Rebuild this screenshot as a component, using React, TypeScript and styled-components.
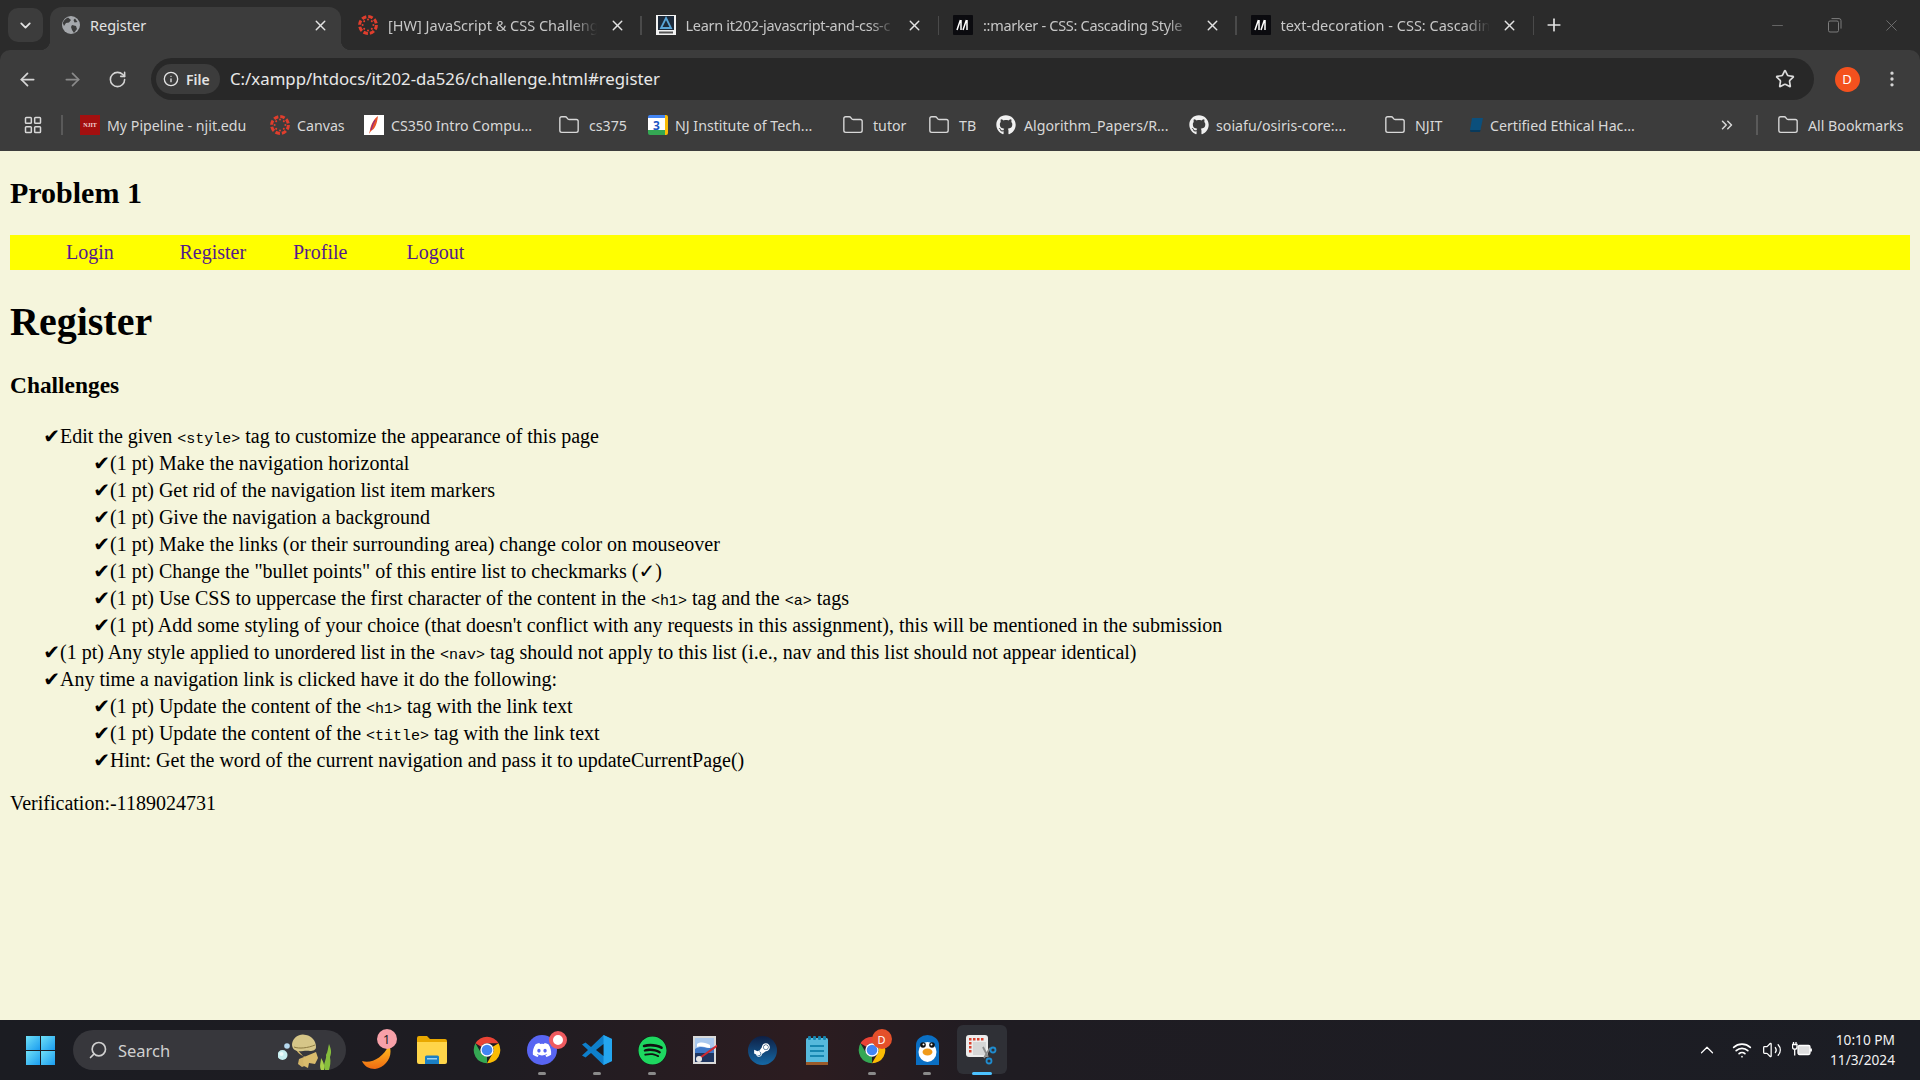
import React from "react";
import styled, { createGlobalStyle } from "styled-components";
import {
  ArrowLeft,
  ArrowRight,
  ChevronDown,
  ChevronsRight,
  ChevronUp,
  EllipsisVertical,
  Folder,
  Info,
  LayoutGrid,
  Minus,
  Plus,
  RotateCw,
  Search,
  Star,
  Volume2,
  Wifi,
  X,
} from "lucide-react";
import { FaDiscord, FaGithub, FaSpotify, FaSteamSymbol } from "react-icons/fa";

const UI_FONT = `"Noto Sans", "Open Sans", sans-serif`;

const GlobalStyle = createGlobalStyle`
  html, body { margin: 0; padding: 0; height: 100%; overflow: hidden; }
  #root { height: 100%; }
`;

/* ---------- favicons ---------- */

const GlobeFav = () => (
  <svg width="18" height="18" viewBox="0 0 18 18">
    <circle cx="9" cy="9" r="9" fill="#a5a8ac" />
    <path d="M6 1.5 9 4 7 6.5 4 7 2 10 .8 7A9 9 0 0 1 6 1.5zM10 9l4 1 1 3-3 4-2-3-1-3zM13 2.5l2.5 3.5-3 .5-1-2.5z" fill="#3c3c3c" />
  </svg>
);

const CanvasFav = ({ size = 20 }: { size?: number }) => (
  <svg width={size} height={size} viewBox="0 0 20 20" fill="#e03e2d">
    <circle cx="10" cy="10" r="8.4" fill="none" stroke="#e03e2d" strokeWidth="3" strokeDasharray="4.6 2" />
    {[0, 45, 90, 135, 180, 225, 270, 315].map((a) => (
      <circle key={a} cx="10" cy="4.6" r="1" transform={`rotate(${a} 10 10)`} />
    ))}
  </svg>
);

const LearnFav = () => (
  <svg width="20" height="20" viewBox="0 0 20 20">
    <rect width="20" height="20" fill="#f2f2f2" />
    <rect x="2" y="1" width="16" height="14" fill="#1c2a3a" />
    <path d="M10 3l5 10H5z" fill="none" stroke="#5aa6d8" strokeWidth="1.8" />
    <rect x="3" y="16.5" width="14" height="2" fill="#555" />
  </svg>
);

const MdnFav = () => (
  <svg width="20" height="20" viewBox="0 0 20 20">
    <rect width="20" height="20" rx="1" fill="#0b0b0f" />
    <path d="M4 15 7.4 5M8 15V5M10 15 13.4 5M14 15V5" stroke="#fff" strokeWidth="1.5" fill="none" />
  </svg>
);

const NjitMark = styled.span`
  width: 20px;
  height: 20px;
  background: #a30f0f;
  color: #f3d6d6;
  font: 700 6px "Liberation Serif", serif;
  display: flex;
  align-items: center;
  justify-content: center;
`;

const FeatherFav = () => (
  <svg width="20" height="20" viewBox="0 0 20 20">
    <rect width="20" height="20" fill="#fff" />
    <path d="M14 1c-4 3-7 8-8 14l-1 4 2-3c4-2 6-7 7-15z" fill="#e8532b" />
    <path d="M11 5c-2 3-3 6-4 10" stroke="#8e2a86" strokeWidth="1.2" fill="none" />
  </svg>
);

const CalendarMark = styled.span`
  width: 20px;
  height: 20px;
  border-radius: 2px;
  background: linear-gradient(#4285f4 0 3px, #fff 3px 15px, #34a853 15px);
  border-right: 3px solid #fbbc04;
  box-sizing: border-box;
  color: #1a56c4;
  font: 700 12px ${UI_FONT};
  display: flex;
  align-items: center;
  justify-content: center;
`;

const BookFav = () => (
  <svg width="18" height="18" viewBox="0 0 18 18">
    <path d="M5 2h11l-2.5 12H3z" fill="#0b4f7c" />
    <path d="M3 14h10.500L13 16H3.500z" fill="#083a5c" />
  </svg>
);

const ChromeLogo = ({ size }: { size: number }) => (
  <svg width={size} height={size} viewBox="0 0 48 48">
    <path d="M6.68 14A20 20 0 0 1 41.32 14H24A10 10 0 0 0 15.34 19Z" fill="#ea4335" />
    <path d="M6.68 14A20 20 0 0 1 41.32 14H24A10 10 0 0 0 15.34 19Z" fill="#fbbc04" transform="rotate(120 24 24)" />
    <path d="M6.68 14A20 20 0 0 1 41.32 14H24A10 10 0 0 0 15.34 19Z" fill="#34a853" transform="rotate(240 24 24)" />
    <circle cx="24" cy="24" r="10" fill="#fff" />
    <circle cx="24" cy="24" r="8" fill="#4285f4" />
  </svg>
);

const WindowsLogo = () => (
  <svg width="29" height="29" viewBox="0 0 29 29">
    <defs>
      <linearGradient id="win" x1="0" y1="0" x2="1" y2="1">
        <stop offset="0" stopColor="#6fe0f7" />
        <stop offset="1" stopColor="#1a9cf0" />
      </linearGradient>
    </defs>
    <rect width="14" height="14" fill="url(#win)" />
    <rect x="15" width="14" height="14" fill="url(#win)" />
    <rect y="15" width="14" height="14" fill="url(#win)" />
    <rect x="15" y="15" width="14" height="14" fill="url(#win)" />
  </svg>
);

const Jellyfish = () => (
  <svg width="58" height="40" viewBox="0 0 58 40">
    <circle cx="4.500" cy="25" r="5" fill="#c8eef0" />
    <circle cx="3.500" cy="24" r="2" fill="#eefbfb" />
    <circle cx="9" cy="16" r="2.800" fill="#b6d8ee" />
    <path d="M17 17c2 6 5 8 11 10l1 8-5 2-4-3 1-5 5-2" fill="#d2b468" />
    <path d="M26 27l12-5 2 6-3 6-6-1-1 5-4-2-1-5z" fill="#d9bb6c" />
    <path d="M14 14C15 7 22 3 28 5c6 1 10 6 10 12 0 3-3 4-6 4-5-1-9 1-13 0-3-1-5-3-5-7z" fill="#d6c688" />
    <path d="M16 17c5 2 14 1 21-2" stroke="#8c7a42" strokeWidth="1" fill="none" />
    <path d="M47 40c-3-6 2-10 1-15 2-4 2-7 3-11 2 5 3 8 1 13 1 5 0 9-1 13z" fill="#86bd3c" />
    <path d="M43 40c-2-4 0-8 0-12 2 3 4 7 3 12z" fill="#a9cf4a" />
  </svg>
);

const Moon = () => (
  <svg width="30" height="24" viewBox="0 0 30 24">
    <defs>
      <linearGradient id="moon" x1="0" y1="0" x2="0" y2="1">
        <stop offset="0" stopColor="#ffc21f" />
        <stop offset="1" stopColor="#f06a12" />
      </linearGradient>
    </defs>
    <path d="M27 0c5 10-3 23-14 24C7 24 2 21 0 16c9 3 21-3 27-16z" fill="url(#moon)" />
  </svg>
);

const FolderApp = () => (
  <svg width="30" height="28" viewBox="0 0 30 28">
    <path d="M0 2a2 2 0 0 1 2-2h8l3 3h15a2 2 0 0 1 2 2v3H0z" fill="#e9a800" />
    <path d="M0 6h30v20a2 2 0 0 1-2 2H2a2 2 0 0 1-2-2z" fill="#ffd54a" />
    <path d="M8 21a1.500 1.500 0 0 1 1.500-1.500h11A1.500 1.500 0 0 1 22 21v7H8z" fill="#1b7fc4" />
    <rect x="10" y="22" width="10" height="1.500" fill="#9fd4f2" />
  </svg>
);

const DiscordBadge = styled.span`
  width: 30px;
  height: 30px;
  border-radius: 50%;
  background: #5865f2;
  color: #fff;
  display: flex;
  align-items: center;
  justify-content: center;
`;

const VsCode = () => (
  <svg width="30" height="30" viewBox="0 0 30 30">
    <path d="M21.500 0 30 4v22l-8.500 4L9 18l-5.500 4.500L0 20.500l6-5.500-6-5.500L3.500 7.500 9 12z" fill="#0e7fcb" />
    <path d="M21.500 0 30 4v22l-8.500 4z" fill="#24a6f0" />
    <path d="M21.500 9l-7.500 6 7.500 6z" fill="#1b1c22" />
  </svg>
);

const SpotifyBadge = styled.span`
  width: 29px;
  height: 29px;
  border-radius: 50%;
  background: #111;
  color: #1ed760;
  display: flex;
  align-items: center;
  justify-content: center;
`;

const PaintApp = () => (
  <svg width="24" height="28" viewBox="0 0 24 28">
    <rect width="23" height="28" fill="#d9d9d9" />
    <rect x="2" y="2" width="19" height="24" fill="#3f78c8" />
    <path d="M2 2h19v9c-6 3-12-3-19 2z" fill="#a9c8ee" />
    <path d="M4 8c4-3 9-1 13 1v3c-5 0-9-3-13-1z" fill="#fff" />
    <rect x="2" y="17" width="19" height="9" fill="#1e3560" />
    <path d="M4 24 25 9" stroke="#d02a30" strokeWidth="2" />
    <circle cx="6" cy="23" r="3" fill="#e6e6e6" />
  </svg>
);

const SteamBadge = styled.span`
  width: 29px;
  height: 29px;
  border-radius: 50%;
  background: linear-gradient(#0e1f44, #1569a6);
  color: #fff;
  display: flex;
  align-items: center;
  justify-content: center;
`;

const Notepad = () => (
  <svg width="22" height="29" viewBox="0 0 22 29">
    <rect y="2" width="22" height="27" rx="1.500" fill="#56b9dc" />
    <rect y="26" width="22" height="3" fill="#9a5a2a" />
    <g fill="#1686b0">
      <rect x="2" width="3" height="4" rx="1" />
      <rect x="7" width="3" height="4" rx="1" />
      <rect x="12" width="3" height="4" rx="1" />
      <rect x="17" width="3" height="4" rx="1" />
      <rect x="4" y="9" width="14" height="2" />
      <rect x="4" y="14" width="14" height="2" />
      <rect x="4" y="19" width="14" height="2" />
    </g>
  </svg>
);

const Penguin = () => (
  <svg width="23" height="30" viewBox="0 0 23 30">
    <path d="M0 30V10a11.500 10 0 0 1 23 0v20z" fill="#0a6fc4" />
    <ellipse cx="11.500" cy="17" rx="9" ry="10" fill="#fff" />
    <circle cx="7" cy="10" r="2.800" fill="#111" />
    <circle cx="16" cy="10" r="2.800" fill="#111" />
    <circle cx="7.500" cy="9.500" r="1" fill="#fff" />
    <circle cx="15.500" cy="9.500" r="1" fill="#fff" />
    <ellipse cx="11.500" cy="17" rx="5" ry="3.500" fill="#f09a1a" />
  </svg>
);

const SnipTool = () => (
  <svg width="32" height="30" viewBox="0 0 32 30">
    <rect width="22" height="22" rx="3" fill="#ececec" />
    <rect x="7" y="7" width="13" height="13" fill="#d6d6d6" />
    <g fill="#d8402c">
      <rect x="3" y="3" width="2.500" height="2.500" />
      <rect x="7" y="3" width="2.500" height="2.500" />
      <rect x="11" y="3" width="2.500" height="2.500" />
      <rect x="15" y="3" width="2.500" height="2.500" />
      <rect x="3" y="7" width="2.500" height="2.500" />
      <rect x="3" y="11" width="2.500" height="2.500" />
      <rect x="3" y="15" width="2.500" height="2.500" />
    </g>
    <path d="M17 12 22 22M24 13 18 23" stroke="#8a8a8a" strokeWidth="1.800" />
    <circle cx="27" cy="15" r="2.500" fill="none" stroke="#1f8ccf" strokeWidth="1.800" />
    <circle cx="23" cy="26" r="2.500" fill="none" stroke="#1f8ccf" strokeWidth="1.800" />
  </svg>
);

const BatteryPlug = () => (
  <svg width="20" height="18" viewBox="0 0 20 18" fill="none" stroke="#fff" strokeWidth="1.300">
    <rect x="6" y="4.500" width="12" height="9" rx="1.500" fill="#fff" fillOpacity=".85" />
    <path d="M19 7.500v3" strokeWidth="1.800" />
    <path d="M1.500 1v2.500M4 1v2.500M.5 3.500H5V6a2.200 2.200 0 0 1-4.500 0zM2.700 8v6.500" />
  </svg>
);

const RestoreIcon = () => (
  <svg width="14" height="15" viewBox="0 0 14 15" fill="none" stroke="#7d7d7d">
    <rect x=".5" y="3" width="10" height="11" rx="1.500" />
    <path d="M3.500.6h7.500a2 2 0 0 1 2 2v8" />
  </svg>
);

/* ---------- browser chrome ---------- */

const Screen = styled.div`
  height: 100vh;
  display: flex;
  flex-direction: column;
  background: #2b2b2b;
`;

const TabStrip = styled.div`
  height: 50px;
  flex: none;
  display: flex;
  align-items: flex-end;
  box-sizing: border-box;
  padding-left: 8px;
`;

const TabMenu = styled.div`
  width: 35px;
  height: 34px;
  align-self: flex-start;
  margin: 8px 7px 0 0;
  border-radius: 10px;
  background: #3c3c3c;
  color: #e3e3e3;
  display: flex;
  align-items: center;
  justify-content: center;
`;

const Tab = styled.div<{ $active?: boolean }>`
  position: relative;
  height: 43px;
  box-sizing: border-box;
  flex: none;
  display: flex;
  align-items: center;
  width: ${({ $active }) => ($active ? "291px" : "297.5px")};
  margin-right: ${({ $active }) => ($active ? "4.5px" : "0")};
  padding: 0 0 7px ${({ $active }) => ($active ? "12px" : "12.5px")};
  gap: 10px;
  border-radius: 12px 12px 0 0;
  background: ${({ $active }) => ($active ? "#3c3c3c" : "transparent")};
  color: ${({ $active }) => ($active ? "#e3e3e3" : "#c7c7c7")};

  ${({ $active }) =>
    $active &&
    `
    &::before, &::after {
      content: "";
      position: absolute;
      bottom: 0;
      width: 10px;
      height: 10px;
    }
    &::before { left: -10px; background: radial-gradient(circle at 0 0, transparent 10px, #3c3c3c 10.5px); }
    &::after { right: -10px; background: radial-gradient(circle at 100% 0, transparent 10px, #3c3c3c 10.5px); }
  `}
`;

const TabIcon = styled.span`
  flex: none;
  display: flex;
  align-items: center;
`;

const TabTitle = styled.span<{ $fade?: boolean; $tight?: boolean }>`
  flex: 1;
  min-width: 0;
  white-space: nowrap;
  font: 400 14.5px ${UI_FONT};
  letter-spacing: ${({ $tight }) => ($tight ? "-0.3px" : "0")};
  mask-image: ${({ $fade }) =>
    $fade ? "linear-gradient(90deg, #000 88%, transparent)" : "none"};
`;

const TabClose = styled.span<{ $active?: boolean }>`
  flex: none;
  width: 20px;
  display: flex;
  justify-content: center;
  margin-right: ${({ $active }) => ($active ? "11px" : "16px")};
  color: #e3e3e3;
`;

const TabSep = styled.span`
  position: absolute;
  right: 1.500px;
  top: 9px;
  width: 1.500px;
  height: 19px;
  background: #4a4a4a;
`;

const NewTab = styled.div`
  margin: 0 0 15px 8px;
  color: #e3e3e3;
  display: flex;
`;

const WindowControls = styled.div`
  margin-left: auto;
  align-self: flex-start;
  display: flex;
  align-items: center;
  height: 50px;
`;

const WinButton = styled.span`
  width: 57px;
  display: flex;
  justify-content: center;
  color: #7d7d7d;
`;

const ToolbarRow = styled.div`
  height: 58px;
  flex: none;
  box-sizing: border-box;
  padding: 8px 5.500px 8px 4.500px;
  display: flex;
  align-items: center;
  background: #3c3c3c;
  border-radius: 10px 10px 0 0;
`;

const NavBtn = styled.span<{ $dim?: boolean }>`
  width: 45px;
  flex: none;
  display: flex;
  justify-content: center;
  color: ${({ $dim }) => ($dim ? "#8a8a8a" : "#d5d5d5")};
`;

const Address = styled.div`
  flex: 1;
  height: 42px;
  margin: 0 10.500px 0 11.500px;
  padding: 0 19px 0 5px;
  box-sizing: border-box;
  border-radius: 21px;
  background: #282828;
  display: flex;
  align-items: center;
`;

const SiteChip = styled.div`
  width: 64px;
  height: 30px;
  flex: none;
  border-radius: 15px;
  background: #3c3c3c;
  color: #e3e3e3;
  box-sizing: border-box;
  padding-left: 7px;
  display: flex;
  align-items: center;
  gap: 7px;
  font: 600 14px ${UI_FONT};
`;

const Url = styled.span`
  flex: 1;
  margin: 0 0 2px 10px;
  color: #e8e8e8;
  font: 400 16.800px ${UI_FONT};
  white-space: nowrap;
`;

const Avatar = styled.span`
  width: 25px;
  height: 25px;
  border-radius: 50%;
  background: #f4511e;
  color: #fff;
  font: 400 13px ${UI_FONT};
  display: flex;
  align-items: center;
  justify-content: center;
`;

const BookmarkBar = styled.div`
  height: 43px;
  flex: none;
  box-sizing: border-box;
  padding: 0 0 9px 23px;
  background: #3c3c3c;
  display: flex;
  align-items: center;
  color: #d8d8d8;
`;

const BarSep = styled.span<{ $left: number; $right: number }>`
  width: 2px;
  height: 20px;
  flex: none;
  background: #5a5a5a;
  margin: 0 ${({ $right }) => $right}px 0 ${({ $left }) => $left}px;
`;

const Bookmark = styled.div<{ $width: number; $gap: number }>`
  flex: none;
  width: ${({ $width }) => $width}px;
  display: flex;
  align-items: center;
  gap: ${({ $gap }) => $gap}px;
  font: 400 14.200px ${UI_FONT};
  white-space: nowrap;
`;

const BookmarkIcon = styled.span`
  flex: none;
  display: flex;
  align-items: center;
  justify-content: center;
  min-width: 18px;
  color: #d8d8d8;
`;

const MoreBookmarks = styled.span`
  margin-left: auto;
  display: flex;
  color: #d8d8d8;
`;

/* ---------- page ---------- */

const Page = styled.main`
  flex: 1;
  min-height: 0;
  box-sizing: border-box;
  padding: 0.1px 10px 0;
  background: #f5f5dc;
  color: #000;
  font: 400 20px "Liberation Serif", "DejaVu Sans", serif;
`;

const ProblemTitle = styled.h2`
  font-size: 30px;
  margin: 24.900px 0;
`;

const NavBar = styled.nav`
  background: #ffff00;
  height: 35px;
`;

const NavList = styled.ul`
  list-style: none;
  margin: 0;
  padding: 0 0 0 56px;
  height: 100%;
  display: flex;
  align-items: center;
`;

const NavItem = styled.li`
  width: 113.500px;
`;

const NavLink = styled.a`
  color: #551a8b;
  text-decoration: none;
`;

const PageTitle = styled.h1`
  font-size: 40px;
  margin: 28px 0 26px;
`;

const SectionTitle = styled.h3`
  font-size: 23.400px;
  line-height: 28px;
  margin: 23.400px 0 24.400px;
`;

const Checklist = styled.ul<{ $nested?: boolean }>`
  margin: ${({ $nested }) => ($nested ? "0" : "20px 0 18px")};
  padding-left: 50px;
  line-height: 27px;

  & > li::marker {
    content: "✔";
    font-family: "DejaVu Sans", sans-serif;
    line-height: 1;
  }
`;

const Code = styled.code`
  font-family: "Liberation Mono", monospace;
  font-size: 15px;
  line-height: 1;
`;

const Check = styled.span`
  line-height: 1;
`;

const Verification = styled.p`
  margin: 18px 0;
`;

/* ---------- taskbar ---------- */

const Taskbar = styled.footer`
  height: 60px;
  flex: none;
  box-sizing: border-box;
  padding: 0 0 0 26px;
  display: flex;
  align-items: center;
  background: linear-gradient(90deg, #1b1c22 0%, #1e1c22 25%, #2c1c20 42%, #1f1c22 52%, #1b1d24 100%);
  color: #fff;
`;

const StartBtn = styled.span`
  display: flex;
  margin-right: 18px;
`;

const SearchPill = styled.div`
  width: 273px;
  height: 40px;
  margin-right: 3.500px;
  flex: none;
  box-sizing: border-box;
  padding: 0 10px 0 15px;
  border-radius: 20px;
  background: #37373c;
  color: #d0d0d0;
  display: flex;
  align-items: center;
  gap: 10px;
  font: 400 16.500px ${UI_FONT};
`;

const SearchText = styled.span`
  flex: 1;
`;

const AppSlot = styled.div<{ $current?: boolean }>`
  position: relative;
  width: 55px;
  height: 60px;
  flex: none;
  display: flex;
  align-items: center;
  justify-content: center;

  ${({ $current }) =>
    $current &&
    `
    &::before {
      content: "";
      position: absolute;
      left: 2.500px;
      right: 2.500px;
      top: 5px;
      bottom: 6px;
      border-radius: 6px;
      background: #2f3036;
    }
    & > * { position: relative; }
  `}
`;

const MoonWrap = styled.span`
  display: flex;
  margin-top: 14px;
`;

const PaintWrap = styled.span`
  display: flex;
  margin-right: 5px;
`;

const RunDot = styled.span<{ $current?: boolean }>`
  position: absolute !important;
  bottom: 5px;
  left: 50%;
  transform: translateX(-50%);
  height: 3px;
  border-radius: 2px;
  width: ${({ $current }) => ($current ? "20px" : "8px")};
  background: ${({ $current }) => ($current ? "#4cc2ff" : "#8a8a8a")};
`;

const CountBadge = styled.span`
  position: absolute;
  top: 9px;
  left: 27px;
  width: 20px;
  height: 20px;
  border-radius: 50%;
  background: #f7a0a8;
  color: #1b1c22;
  font: 400 12.500px ${UI_FONT};
  display: flex;
  align-items: center;
  justify-content: center;
`;

const RedDot = styled.span`
  position: absolute;
  top: 11px;
  left: 34px;
  width: 10px;
  height: 10px;
  border-radius: 50%;
  background: #fff;
  border: 4px solid #ee5a5f;
`;

const ProfileBadge = styled.span`
  position: absolute;
  top: 9px;
  left: 27px;
  width: 20px;
  height: 20px;
  border-radius: 50%;
  background: #e4502a;
  color: #fff;
  font: 400 11px ${UI_FONT};
  display: flex;
  align-items: center;
  justify-content: center;
`;

const Tray = styled.div`
  margin-left: auto;
  display: flex;
  align-items: center;
  padding-right: 25px;
`;

const TrayIcon = styled.span<{ $gap?: number }>`
  width: 30px;
  margin-right: ${({ $gap }) => $gap ?? 0}px;
  display: flex;
  justify-content: center;
  color: #fff;
`;

const Clock = styled.div`
  width: 78px;
  text-align: right;
  font: 400 13.700px/20px ${UI_FONT};
  color: #f2f2f2;
`;

/* ---------- data ---------- */

const tabs = [
  { title: "[HW] JavaScript & CSS Challeng", icon: <CanvasFav /> },
  { title: "Learn it202-javascript-and-css-c", icon: <LearnFav />, tight: true },
  { title: "::marker - CSS: Cascading Style", icon: <MdnFav />, tight: true },
  { title: "text-decoration - CSS: Cascadin", icon: <MdnFav /> },
];

const folder = <Folder size={22} strokeWidth={1.5} />;
const github = <FaGithub size={20} color="#f0f0f0" />;

const bookmarks = [
  { label: "My Pipeline - njit.edu", width: 190, gap: 7, icon: <NjitMark>NJIT</NjitMark> },
  { label: "Canvas", width: 94, gap: 7, icon: <CanvasFav /> },
  { label: "CS350 Intro Compu...", width: 194, gap: 7, icon: <FeatherFav /> },
  { label: "cs375", width: 90, gap: 9, icon: folder },
  { label: "NJ Institute of Tech...", width: 194, gap: 7, icon: <CalendarMark>3</CalendarMark> },
  { label: "tutor", width: 86, gap: 9, icon: folder },
  { label: "TB", width: 68, gap: 9, icon: folder },
  { label: "Algorithm_Papers/R...", width: 193, gap: 8, icon: github },
  { label: "soiafu/osiris-core:...", width: 195, gap: 7, icon: github },
  { label: "NJIT", width: 83, gap: 9, icon: folder },
  { label: "Certified Ethical Hac...", width: 220, gap: 5, icon: <BookFav /> },
];

const checks = [
  "Make the navigation horizontal",
  "Get rid of the navigation list item markers",
  "Give the navigation a background",
  "Make the links (or their surrounding area) change color on mouseover",
];

export default function App() {
  return (
    <>
      <GlobalStyle />
      <Screen>
        <TabStrip>
          <TabMenu>
            <ChevronDown size={17} strokeWidth={2.5} />
          </TabMenu>
          <Tab $active>
            <TabIcon><GlobeFav /></TabIcon>
            <TabTitle>Register</TabTitle>
            <TabClose $active><X size={17} strokeWidth={2} /></TabClose>
          </Tab>
          {tabs.map((t, i) => (
            <Tab key={i}>
              <TabIcon>{t.icon}</TabIcon>
              <TabTitle $fade $tight={t.tight}>{t.title}</TabTitle>
              <TabClose><X size={17} strokeWidth={2} /></TabClose>
              <TabSep />
            </Tab>
          ))}
          <NewTab><Plus size={20} strokeWidth={2} /></NewTab>
          <WindowControls>
            <WinButton><Minus size={17} strokeWidth={1} /></WinButton>
            <WinButton><RestoreIcon /></WinButton>
            <WinButton><X size={19} strokeWidth={1} /></WinButton>
          </WindowControls>
        </TabStrip>

        <ToolbarRow>
          <NavBtn><ArrowLeft size={21} /></NavBtn>
          <NavBtn $dim><ArrowRight size={21} /></NavBtn>
          <NavBtn><RotateCw size={19} /></NavBtn>
          <Address>
            <SiteChip>
              <Info size={16} />
              File
            </SiteChip>
            <Url>C:/xampp/htdocs/it202-da526/challenge.html#register</Url>
            <Star size={20} color="#dcdcdc" />
          </Address>
          <NavBtn><Avatar>D</Avatar></NavBtn>
          <NavBtn><EllipsisVertical size={20} /></NavBtn>
        </ToolbarRow>

        <BookmarkBar>
          <LayoutGrid size={20} strokeWidth={1.8} />
          <BarSep $left={18} $right={17} />
          {bookmarks.map((b) => (
            <Bookmark key={b.label + b.width} $width={b.width} $gap={b.gap}>
              <BookmarkIcon>{b.icon}</BookmarkIcon>
              {b.label}
            </Bookmark>
          ))}
          <MoreBookmarks><ChevronsRight size={18} /></MoreBookmarks>
          <BarSep $left={20} $right={19} />
          <Bookmark $width={143} $gap={9}>
            <BookmarkIcon>{folder}</BookmarkIcon>
            All Bookmarks
          </Bookmark>
        </BookmarkBar>

        <Page>
          <ProblemTitle>Problem 1</ProblemTitle>
          <NavBar>
            <NavList>
              {["Login", "Register", "Profile", "Logout"].map((l) => (
                <NavItem key={l}><NavLink href="#">{l}</NavLink></NavItem>
              ))}
            </NavList>
          </NavBar>
          <PageTitle>Register</PageTitle>
          <SectionTitle>Challenges</SectionTitle>
          <Checklist>
            <li>
              Edit the given <Code>&lt;style&gt;</Code> tag to customize the appearance of this page
              <Checklist $nested>
                {checks.map((c) => (
                  <li key={c}>(1 pt) {c}</li>
                ))}
                <li>(1 pt) Change the "bullet points" of this entire list to checkmarks (<Check>✓</Check>)</li>
                <li>(1 pt) Use CSS to uppercase the first character of the content in the <Code>&lt;h1&gt;</Code> tag and the <Code>&lt;a&gt;</Code> tags</li>
                <li>(1 pt) Add some styling of your choice (that doesn't conflict with any requests in this assignment), this will be mentioned in the submission</li>
              </Checklist>
            </li>
            <li>(1 pt) Any style applied to unordered list in the <Code>&lt;nav&gt;</Code> tag should not apply to this list (i.e., nav and this list should not appear identical)</li>
            <li>
              Any time a navigation link is clicked have it do the following:
              <Checklist $nested>
                <li>(1 pt) Update the content of the <Code>&lt;h1&gt;</Code> tag with the link text</li>
                <li>(1 pt) Update the content of the <Code>&lt;title&gt;</Code> tag with the link text</li>
                <li>Hint: Get the word of the current navigation and pass it to updateCurrentPage()</li>
              </Checklist>
            </li>
          </Checklist>
          <Verification>Verification:-1189024731</Verification>
        </Page>

        <Taskbar>
          <StartBtn><WindowsLogo /></StartBtn>
          <SearchPill>
            <Search size={20} style={{ transform: "scaleX(-1)" }} />
            <SearchText>Search</SearchText>
            <Jellyfish />
          </SearchPill>
          <AppSlot><MoonWrap><Moon /></MoonWrap><CountBadge>1</CountBadge></AppSlot>
          <AppSlot><FolderApp /></AppSlot>
          <AppSlot><ChromeLogo size={32} /></AppSlot>
          <AppSlot>
            <DiscordBadge><FaDiscord size={20} /></DiscordBadge>
            <RedDot />
            <RunDot />
          </AppSlot>
          <AppSlot><VsCode /><RunDot /></AppSlot>
          <AppSlot><SpotifyBadge><FaSpotify size={29} /></SpotifyBadge><RunDot /></AppSlot>
          <AppSlot><PaintWrap><PaintApp /></PaintWrap></AppSlot>
          <AppSlot><SteamBadge><FaSteamSymbol size={18} /></SteamBadge></AppSlot>
          <AppSlot><Notepad /></AppSlot>
          <AppSlot><ChromeLogo size={32} /><ProfileBadge>D</ProfileBadge><RunDot /></AppSlot>
          <AppSlot><Penguin /><RunDot /></AppSlot>
          <AppSlot $current><SnipTool /><RunDot $current /></AppSlot>
          <Tray>
            <TrayIcon $gap={5}><ChevronUp size={22} strokeWidth={1.3} /></TrayIcon>
            <TrayIcon><Wifi size={20} strokeWidth={2} /></TrayIcon>
            <TrayIcon><Volume2 size={20} strokeWidth={1.5} /></TrayIcon>
            <TrayIcon><BatteryPlug /></TrayIcon>
            <Clock>
              10:10 PM
              <br />
              11/3/2024
            </Clock>
          </Tray>
        </Taskbar>
      </Screen>
    </>
  );
}
